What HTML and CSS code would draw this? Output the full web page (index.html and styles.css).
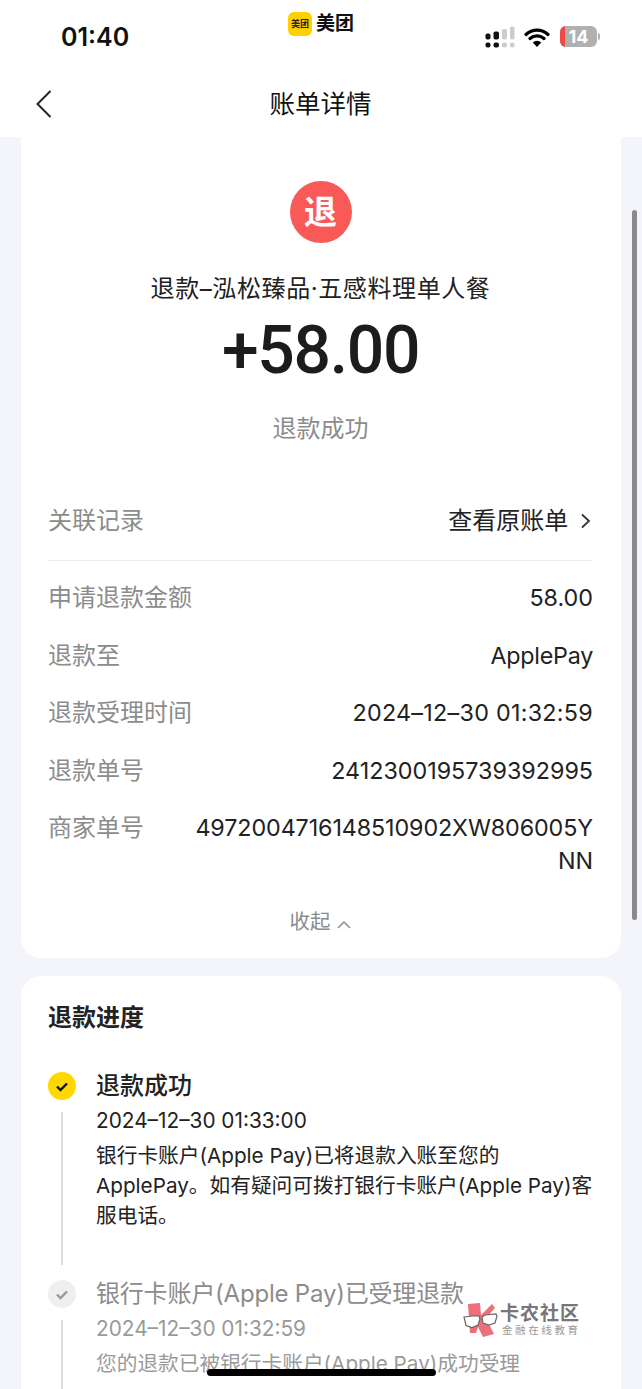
FILE: index.html
```html
<!DOCTYPE html>
<html lang="zh-CN">
<head>
    <meta charset="UTF-8">
    <title>账单详情</title>
    <link rel="stylesheet" href="styles.css">
</head>
<body>
<div class="page">
    <header class="top">
        <div class="status">
            <span class="time">01:40</span>
            <div class="brand">
                <span class="brand-icon">美团</span>
                <span class="brand-name">美团</span>
            </div>
            <div class="status-icons">
                <svg class="signal" width="30" height="22" viewBox="0 0 30 22">
                    <g fill="#111">
                        <rect x="0.5" y="7.5" width="5" height="6" rx="1.8"/>
                        <rect x="8.5" y="5.5" width="5.5" height="8" rx="1.8"/>
                        <rect x="0.5" y="16.5" width="5" height="5" rx="2"/>
                        <rect x="8.5" y="16.5" width="5.5" height="5" rx="2"/>
                    </g>
                    <g fill="#ccc">
                        <rect x="17" y="3" width="5" height="10.5" rx="1.8"/>
                        <rect x="25" y="0.5" width="4.5" height="13" rx="1.8"/>
                        <rect x="17" y="16.5" width="5" height="5" rx="2"/>
                        <rect x="25" y="16.5" width="4.5" height="5" rx="2"/>
                    </g>
                </svg>
                <svg class="wifi" width="26" height="20" viewBox="0 0 26 20">
                    <path d="M2 7.5a16 16 0 0 1 22 0M6 11.5a10.5 10.5 0 0 1 14 0" fill="none" stroke="#000" stroke-width="3.2" stroke-linecap="round"/>
                    <path d="M13 20l-4.2-4.6a6 6 0 0 1 8.4 0z" fill="#000"/>
                </svg>
                <div class="battery">
                    <span class="battery-low"></span>
                    <span class="battery-num">14</span>
                </div>
                <span class="battery-cap"></span>
            </div>
        </div>
        <nav class="nav">
            <svg class="back" width="18" height="30" viewBox="0 0 18 30">
                <path d="M15.5 2L2.5 15l13 13" fill="none" stroke="#222" stroke-width="2"/>
            </svg>
            <h1 class="nav-title">账单详情</h1>
        </nav>
    </header>

    <main class="content">
        <section class="card card-bill">
            <div class="summary">
                <div class="refund-icon">退</div>
                <div class="bill-name">退款–泓松臻品·五感料理单人餐</div>
                <div class="amount">+58.00</div>
                <div class="bill-state">退款成功</div>
            </div>
            <div class="row row-link">
                <span class="label">关联记录</span>
                <span class="value value-cn">查看原账单
                    <svg class="arrow" width="11" height="16" viewBox="0 0 11 16">
                        <path d="M2 1.5L9 8l-7 6.5" fill="none" stroke="#333" stroke-width="1.8"/>
                    </svg>
                </span>
            </div>
            <div class="rows">
                <div class="row"><span class="label">申请退款金额</span><span class="value">58.00</span></div>
                <div class="row"><span class="label">退款至</span><span class="value value-pay">ApplePay</span></div>
                <div class="row"><span class="label">退款受理时间</span><span class="value value-date">2024–12–30 01:32:59</span></div>
                <div class="row"><span class="label">退款单号</span><span class="value">2412300195739392995</span></div>
                <div class="row"><span class="label">商家单号</span><span class="value value-long">4972004716148510902XW806005YNN</span></div>
            </div>
            <div class="fold">收起
                <svg width="14" height="9" viewBox="0 0 14 9">
                    <path d="M1 8l6-6 6 6" fill="none" stroke="#8c8c8c" stroke-width="1.5"/>
                </svg>
            </div>
        </section>

        <section class="card card-progress">
            <h2 class="progress-title">退款进度</h2>
            <div class="step">
                <div class="step-side">
                    <span class="dot dot-on">
                        <svg width="14" height="11" viewBox="0 0 14 11"><path d="M2 5.5l3.5 3.5L12 2.5" fill="none" stroke="#111" stroke-width="2.4"/></svg>
                    </span>
                    <span class="step-line"></span>
                </div>
                <div class="step-body">
                    <div class="step-name">退款成功</div>
                    <div class="step-time">2024–12–30 01:33:00</div>
                    <p class="step-text">银行卡账户(Apple Pay)已将退款入账至您的ApplePay。如有疑问可拨打银行卡账户(Apple Pay)客服电话。</p>
                </div>
            </div>
            <div class="step step-old">
                <div class="step-side">
                    <span class="dot">
                        <svg width="14" height="11" viewBox="0 0 14 11"><path d="M2 5.5l3.5 3.5L12 2.5" fill="none" stroke="#999" stroke-width="2.4"/></svg>
                    </span>
                    <span class="step-line"></span>
                </div>
                <div class="step-body">
                    <div class="step-name">银行卡账户(Apple Pay)已受理退款</div>
                    <div class="step-time">2024–12–30 01:32:59</div>
                    <p class="step-text">您的退款已被银行卡账户(Apple Pay)成功受理</p>
                </div>
            </div>
        </section>
    </main>

    <div class="scrollbar"></div>

    <div class="watermark">
        <svg width="35" height="36" viewBox="0 0 35 36">
            <path d="M5 2l12-1 1 12L29 2l3 4-9 10 8 16-11 3-5-10-2 6H7z" fill="#ec6f7c"/>
            <path d="M1 15l8-1h7l1 3-2 6-6 2.500-6-2z" fill="#fff" stroke="#666" stroke-width="1.2"/>
            <path d="M19 15l3-2 11-1 1 2-2 7-6 2-6-2z" fill="#fff" stroke="#666" stroke-width="1.2"/>
        </svg>
        <div class="watermark-text">
            <div class="wm-name">卡农社区</div>
            <div class="wm-sub">金融在线教育</div>
        </div>
    </div>

    <div class="home-bar"></div>
</div>
</body>
</html>
```

FILE: styles.css
```css
* {
    box-sizing: border-box;
}
html, body {
    margin: 0;
    padding: 0;
}
body {
    font-family: "Inter", "Noto Sans CJK SC", sans-serif;
    color: #222;
}
.page {
    position: relative;
    width: 642px;
    height: 1389px;
    overflow: hidden;
    background: #f4f5fa;
}

/* top bar */
.top {
    background: #fff;
    height: 137px;
}
.status {
    display: flex;
    height: 69px;
    padding-left: 61px;
}
.time {
    width: 227px;
    padding-top: 19px;
    font-size: 25px;
    line-height: 37px;
    font-weight: 600;
    font-family: "Inter", sans-serif;
    color: #111;
}
.brand {
    display: flex;
    gap: 4px;
    width: 197px;
    height: 36px;
    padding-top: 12px;
}
.brand-icon {
    width: 24px;
    height: 24px;
    border-radius: 6px;
    background: #ffd100;
    font-size: 9px;
    line-height: 24px;
    text-align: center;
    font-weight: 700;
    color: #222;
}
.brand-name {
    font-size: 19px;
    line-height: 24px;
    font-weight: 700;
    color: #111;
}
.status-icons {
    display: flex;
    align-items: flex-start;
    padding-top: 26px;
}
.signal {
    margin-right: 9px;
}
.wifi {
    margin: 1px 10px 0 0;
}
.battery {
    position: relative;
    width: 37px;
    height: 21px;
    border-radius: 6px;
    background: #b0b0b0;
    overflow: hidden;
    text-align: center;
}
.battery-low {
    position: absolute;
    left: 0;
    top: 0;
    width: 5px;
    height: 21px;
    background: #ee4a45;
}
.battery-num {
    position: relative;
    font-size: 18px;
    line-height: 21px;
    font-weight: 700;
    color: #fff;
    font-family: "Inter", sans-serif;
}
.battery-cap {
    width: 2px;
    height: 7px;
    margin: 7px 0 0 1px;
    border-radius: 0 2px 2px 0;
    background: #b0b0b0;
}
.nav {
    position: relative;
    height: 68px;
}
.back {
    position: absolute;
    left: 35px;
    top: 20px;
}
.nav-title {
    margin: 0;
    padding-right: 1px;
    text-align: center;
    font-size: 25.5px;
    line-height: 70px;
    font-weight: 400;
    color: #111;
}

/* cards */
.content {
    padding: 0 21px;
}
.card {
    background: #fff;
    border-radius: 20px;
}
.card-bill {
    height: 821px;
    margin-bottom: 18px;
    padding: 0 28px 0 27px;
    border-top-left-radius: 0;
    border-top-right-radius: 0;
}
.summary {
    text-align: center;
    padding-top: 44px;
    height: 340px;
}
.refund-icon {
    width: 62px;
    height: 62px;
    margin: 0 auto;
    border-radius: 50%;
    background: #fa5a57;
    color: #fff;
    font-size: 33px;
    line-height: 62px;
    font-weight: 700;
}
.bill-name {
    margin-top: 28px;
    font-size: 24px;
    line-height: 36px;
    letter-spacing: 0.6px;
    white-space: nowrap;
}
.amount {
    margin-top: 7px;
    font-size: 66px;
    line-height: 74px;
    font-weight: 500;
    letter-spacing: -1.3px;
    font-family: "Roboto", sans-serif;
    color: #1c1c1c;
}
.bill-state {
    margin-top: 23px;
    font-size: 24px;
    line-height: 36px;
    color: #8c8c8c;
}
.row {
    display: flex;
    justify-content: space-between;
    font-size: 23.3px;
    line-height: 33px;
}
.row-link {
    height: 84px;
    padding-top: 27px;
    border-bottom: 1px solid #ededed;
}
.rows {
    display: flex;
    flex-direction: column;
    gap: 24.5px;
    padding-top: 20px;
}
.label {
    flex: none;
    color: #8c8c8c;
    font-size: 24px;
}
.value {
    color: #222;
    text-align: right;
}
.value-cn {
    font-size: 24px;
}
.value-pay {
    letter-spacing: -0.25px;
}
.value-date {
    letter-spacing: 0.28px;
}
.value-long {
    width: 402px;
    letter-spacing: -0.1px;
    word-break: break-all;
}
.arrow {
    margin: 0 2px 0 5px;
}
.fold {
    margin-top: 30px;
    text-align: center;
    font-size: 20.5px;
    line-height: 30px;
    color: #8c8c8c;
}
.fold svg {
    margin-left: 1px;
}
.card-progress {
    padding: 24px 28px 0 27px;
    height: 500px;
}
.progress-title {
    margin: 0 0 36px;
    font-size: 24px;
    line-height: 36px;
    font-weight: 700;
    color: #222;
}

/* progress steps */
.step {
    display: flex;
    gap: 20px;
    height: 208px;
}
.step-side {
    display: flex;
    flex-direction: column;
    align-items: center;
    flex: none;
    width: 28px;
}
.dot {
    display: flex;
    align-items: center;
    justify-content: center;
    flex: none;
    width: 28px;
    height: 28px;
    border-radius: 50%;
    background: #efefef;
}
.dot-on {
    background: #ffd800;
}
.step-line {
    width: 2px;
    height: 153px;
    margin-top: 12px;
    background: #dcdcdc;
}
.step-name {
    font-size: 24px;
    line-height: 28px;
    font-weight: 500;
    color: #222;
}
.step-time {
    margin-top: 3px;
    font-size: 20.8px;
    line-height: 36px;
}
.step-text {
    margin: 2px 0 0;
    font-size: 20.7px;
    line-height: 30px;
    width: 499px;
}
.step-old .step-name {
    font-weight: 400;
    letter-spacing: -0.2px;
    color: #8c8c8c;
}
.step-old .step-time,
.step-old .step-text {
    color: #9a9a9a;
}

/* things lying over the page */
.scrollbar {
    position: absolute;
    left: 632px;
    top: 210px;
    width: 5px;
    height: 710px;
    border-radius: 3px;
    background: #8a8a8a;
}
.watermark {
    position: absolute;
    left: 463px;
    top: 1302px;
    display: flex;
    gap: 2px;
}
.watermark-text {
    padding-top: 1px;
}
.wm-name {
    font-size: 19px;
    line-height: 21px;
    font-weight: 700;
    color: #777;
    letter-spacing: 1px;
    white-space: nowrap;
}
.wm-sub {
    padding-left: 2px;
    font-size: 10.5px;
    line-height: 14px;
    color: #999;
    letter-spacing: 2.6px;
    white-space: nowrap;
}
.home-bar {
    position: absolute;
    left: 207px;
    top: 1369px;
    width: 229px;
    height: 7px;
    border-radius: 4px;
    background: #000;
}
```
